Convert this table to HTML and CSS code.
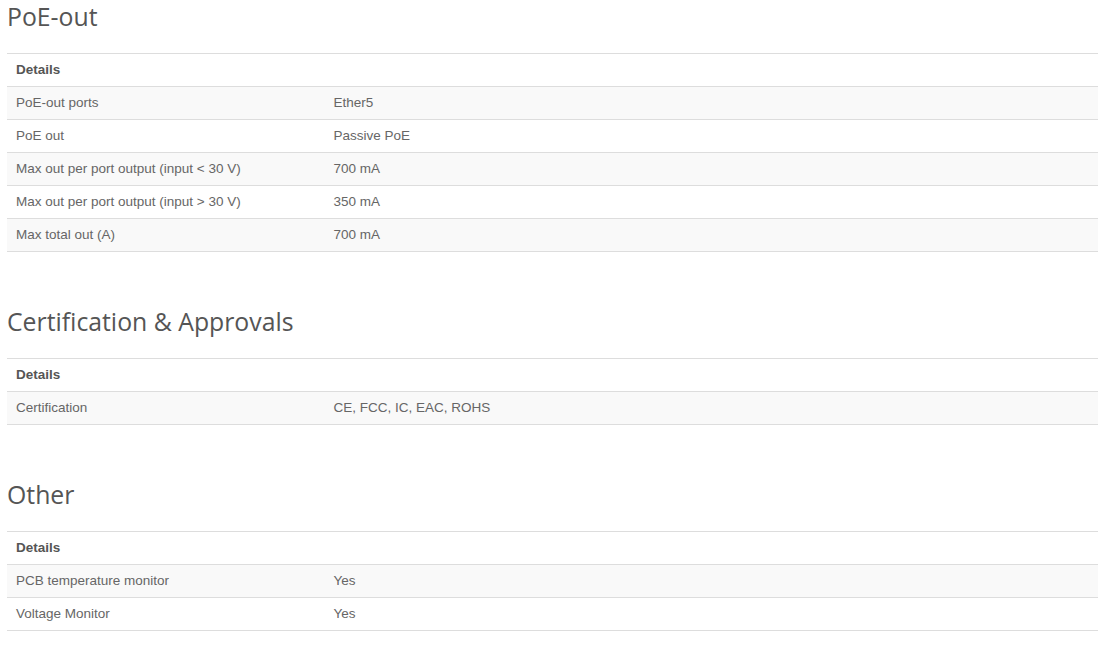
FILE: index.html
```html
<!DOCTYPE html>
<html>
<head>
<meta charset="utf-8">
<link rel="stylesheet" href="styles.css">
</head>
<body>
<div class="page">
  <section class="spec">
    <h2 class="spec-title">PoE-out</h2>
    <table class="spec-table">
      <thead><tr><th colspan="2">Details</th></tr></thead>
      <tbody>
        <tr><td class="label">PoE-out ports</td><td>Ether5</td></tr>
        <tr><td class="label">PoE out</td><td>Passive PoE</td></tr>
        <tr><td class="label">Max out per port output (input &lt; 30 V)</td><td>700 mA</td></tr>
        <tr><td class="label">Max out per port output (input &gt; 30 V)</td><td>350 mA</td></tr>
        <tr><td class="label">Max total out (A)</td><td>700 mA</td></tr>
      </tbody>
    </table>
  </section>
  <section class="spec">
    <h2 class="spec-title">Certification &amp; Approvals</h2>
    <table class="spec-table">
      <thead><tr><th colspan="2">Details</th></tr></thead>
      <tbody>
        <tr><td class="label">Certification</td><td>CE, FCC, IC, EAC, ROHS</td></tr>
      </tbody>
    </table>
  </section>
  <section class="spec">
    <h2 class="spec-title">Other</h2>
    <table class="spec-table">
      <thead><tr><th colspan="2">Details</th></tr></thead>
      <tbody>
        <tr><td class="label">PCB temperature monitor</td><td>Yes</td></tr>
        <tr><td class="label">Voltage Monitor</td><td>Yes</td></tr>
      </tbody>
    </table>
  </section>
</div>
</body>
</html>
```
FILE: styles.css
```css
html, body {
  margin: 0;
  padding: 0;
  background: #fff;
}
.page {
  padding: 1px 12px 0 7px;
}
.spec {
  margin-bottom: 54px;
}
.spec-title {
  margin: 0 0 22px;
  font-family: "Open Sans", sans-serif;
  font-weight: 400;
  font-size: 24.8px;
  line-height: 30px;
  color: #555;
}
.spec-table {
  width: 100%;
  border-collapse: collapse;
  font-family: "Liberation Sans", Arial, sans-serif;
  font-size: 13.5px;
  color: #666;
  border-bottom: 1px solid #ddd;
}
.spec-table th,
.spec-table td {
  border-top: 1px solid #ddd;
  padding: 8px 9px;
  line-height: 16px;
  text-align: left;
  vertical-align: top;
}
.spec-table th {
  font-weight: bold;
  color: #555;
}
.spec-table td.label {
  width: 29.1%;
}
.spec-table tbody tr:nth-child(odd) td {
  background: #f9f9f9;
}
```
